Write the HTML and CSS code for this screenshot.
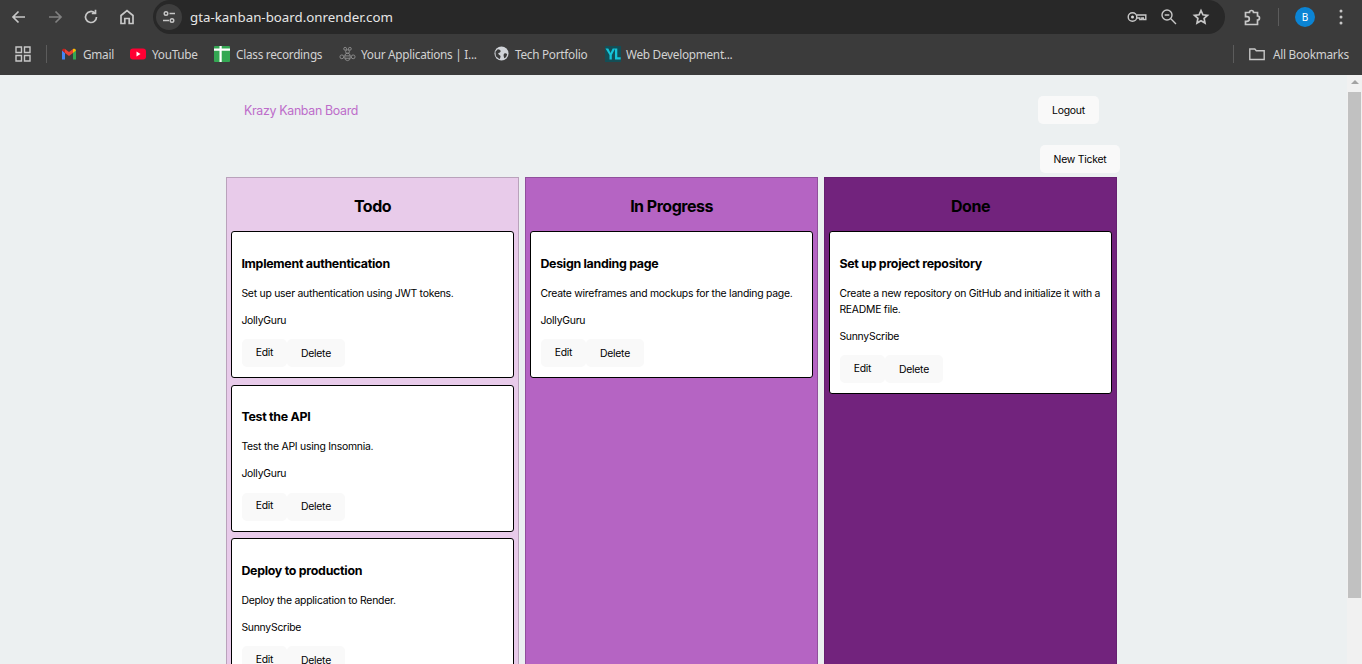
FILE: index.html
```html
<!DOCTYPE html>
<html lang="en">
<head>
<meta charset="utf-8">
<title>Krazy Kanban Board</title>
<link rel="stylesheet" href="styles.css">
</head>
<body>
<div class="browser">
  <header class="toolbar">
    <div class="nav-icons">
      <svg class="tb-icon" viewBox="0 0 20 20"><path d="M16 10H4.500M9.500 4.500 4 10l5.500 5.500" class="ic"/></svg>
      <svg class="tb-icon dim" viewBox="0 0 20 20"><path d="M4 10h11.500M10.500 4.500 16 10l-5.500 5.500" class="ic"/></svg>
      <svg class="tb-icon" viewBox="0 0 20 20"><path d="M15.500 10a5.500 5.500 0 1 1-1.700-4M14.500 2.800V6.500h-3.700" class="ic"/></svg>
      <svg class="tb-icon" viewBox="0 0 20 20"><path d="M4 16.500V8.500L10 3.500l6 5v8h-3.800v-5H7.800v5Z" class="ic"/></svg>
    </div>
    <div class="omnibox">
      <span class="tune"><svg viewBox="0 0 16 16" width="16" height="16"><circle cx="5" cy="4.500" r="1.800" class="ic thin"/><path d="M8.500 4.500H14M2 11.500h6" class="ic thin"/><circle cx="11" cy="11.500" r="1.800" class="ic thin"/></svg></span>
      <span class="url">gta-kanban-board.onrender.com</span>
      <div class="omni-right">
        <svg class="om-icon" viewBox="0 0 20 20"><circle cx="5.500" cy="10" r="4.300" class="ic thin"/><circle cx="5.500" cy="10" r="1.500" fill="#d8d8d8"/><path d="M9.800 8h9v4.500h-2.500v-1.500h-1.500v1.500h-2V11H9.800" class="ic thin"/></svg>
        <svg class="om-icon" viewBox="0 0 20 20"><circle cx="8" cy="8" r="5" class="ic thin"/><path d="M11.800 11.800 17 17M5.700 8h4.600" class="ic thin"/></svg>
        <svg class="om-icon" viewBox="0 0 20 20"><path d="m10 3.500 1.900 4.300 4.600.5-3.400 3.100.9 4.600L10 13.700l-4 2.300.9-4.600-3.400-3.100 4.600-.5Z" class="ic"/></svg>
      </div>
    </div>
    <div class="tb-right">
      <svg class="ext" viewBox="0 0 20 20"><path d="M3.500 5.500h4a2 2 0 0 1 4 0h4V9a2 2 0 0 1 0 4v4.500h-12v-3.200h1.500a2.300 2.300 0 0 0 0-4.600H3.500Z" class="ic"/></svg>
      <span class="vsep"></span>
      <span class="avatar">B</span>
      <svg class="dots" viewBox="0 0 4 16"><circle cx="2" cy="2" r="1.500"/><circle cx="2" cy="8" r="1.500"/><circle cx="2" cy="14" r="1.500"/></svg>
    </div>
  </header>
  <nav class="bookmarks">
    <svg class="apps" viewBox="0 0 16 16"><path class="ic thin" d="M1 1h5.500v5.500H1zM9.500 1H15v5.500H9.500zM1 9.500h5.500V15H1zM9.500 9.500H15V15H9.500z"/></svg>
    <span class="vsep bm-sep"></span>
    <a class="bm bm-gmail"><svg class="fav" viewBox="0 0 16 16"><path d="M1 4v9.500h3V7z" fill="#4285f4"/><path d="M15 4v9.500h-3V7z" fill="#34a853"/><path d="M4 7V3L8 6l4-3v4L8 10z" fill="#ea4335"/><path d="M1 4.500C1 3 3 2.300 4 3v4z" fill="#c5221f"/><path d="M15 4.500c0-1.500-2-2.200-3-1.500v4z" fill="#fbbc04"/></svg>Gmail</a>
    <a class="bm bm-yt"><svg class="fav" viewBox="0 0 16 16"><rect y="2.500" width="16" height="11" rx="3" fill="#ff0033"/><path d="m6.500 5.500 4 2.500-4 2.500z" fill="#fff"/></svg>YouTube</a>
    <a class="bm bm-class"><svg class="fav" viewBox="0 0 16 16"><rect width="16" height="16" rx="1" fill="#34a853"/><path d="M5.500 0h2.200v2.500H16v2.300H7.700V16H5.500V4.800H0V2.500h5.500z" fill="#fff"/></svg>Class recordings</a>
    <a class="bm bm-apps"><svg class="fav bee" viewBox="0 0 18 16"><g fill="none" stroke="#8e8e8e" stroke-width="1"><circle cx="6.500" cy="2.500" r="1.500"/><circle cx="11.500" cy="2.500" r="1.500"/><circle cx="9" cy="5.500" r="2"/><ellipse cx="9" cy="11" rx="3" ry="4"/><circle cx="3" cy="11" r="2"/><circle cx="15" cy="11" r="2"/><path d="M6 10h6M6 12.500h6"/></g></svg>Your Applications | I...</a>
    <a class="bm bm-tech"><svg class="fav globe" viewBox="0 0 16 16"><circle cx="8" cy="8" r="7.500" fill="#d0d3d8"/><path d="M4 3.500c2 .5 3.500 1 3 2.500S4.500 6.500 4.500 8 7 9.500 7 11s-1 3-1 3L2 11 1.500 6zM11 8c1.500-.5 2.500 0 3 1-.5 2-1.500 3.500-3 4-.5-1.500-1.500-4 0-5z" fill="#3b3b3b"/></svg>Tech Portfolio</a>
    <a class="bm bm-web"><svg class="fav" viewBox="0 0 16 16"><rect width="16" height="16" fill="#134e56"/><path d="M.5 2.500h2.800L5.500 7l2.200-4.500h2.500L6.800 9v4.500H4.500V9zM10 2.500h2.300v8.700h3.400v2.300H10z" fill="#15c4d8"/></svg>Web Development...</a>
    <span class="vsep bm-sep2"></span>
    <a class="bm bm-all"><svg class="fav" viewBox="0 0 16 16"><path class="ic thin" d="M.8 3h5l1.500 1.700h7.900v8.800H.8Z"/></svg>All Bookmarks</a>
  </nav>
  <div class="viewport">
    <main class="page">
      <div class="app">
        <div class="topnav">
          <a class="brand">Krazy Kanban Board</a>
          <button class="btn">Logout</button>
        </div>
        <div class="actions"><button class="btn">New Ticket</button></div>
        <section class="board">
          <div class="col col-todo">
            <h2>Todo</h2>
            <article class="card">
              <h3>Implement authentication</h3>
              <p>Set up user authentication using JWT tokens.</p>
              <p class="who">JollyGuru</p>
              <div class="card-btns"><button class="btn edit">Edit</button><button class="btn del">Delete</button></div>
            </article>
            <article class="card">
              <h3>Test the API</h3>
              <p>Test the API using Insomnia.</p>
              <p class="who">JollyGuru</p>
              <div class="card-btns"><button class="btn edit">Edit</button><button class="btn del">Delete</button></div>
            </article>
            <article class="card">
              <h3>Deploy to production</h3>
              <p>Deploy the application to Render.</p>
              <p class="who">SunnyScribe</p>
              <div class="card-btns"><button class="btn edit">Edit</button><button class="btn del">Delete</button></div>
            </article>
          </div>
          <div class="col col-prog">
            <h2>In Progress</h2>
            <article class="card">
              <h3>Design landing page</h3>
              <p>Create wireframes and mockups for the landing page.</p>
              <p class="who">JollyGuru</p>
              <div class="card-btns"><button class="btn edit">Edit</button><button class="btn del">Delete</button></div>
            </article>
          </div>
          <div class="col col-done">
            <h2>Done</h2>
            <article class="card">
              <h3>Set up project repository</h3>
              <p>Create a new repository on GitHub and initialize it with a README file.</p>
              <p class="who">SunnyScribe</p>
              <div class="card-btns"><button class="btn edit">Edit</button><button class="btn del">Delete</button></div>
            </article>
          </div>
        </section>
      </div>
    </main>
    <aside class="scrollbar"><span class="sb-arrow"></span><span class="sb-thumb"></span></aside>
  </div>
</div>
</body>
</html>
```
FILE: styles.css
```css
* { box-sizing: border-box; }
html, body { margin: 0; height: 100%; overflow: hidden; }
body { font-family: Inter, "Liberation Sans", sans-serif; }
.browser { display: flex; flex-direction: column; height: 664px; }

.toolbar { display: flex; height: 36px; background: #3b3b3b; flex: none; }
.ic { fill: none; stroke: #c7c7c7; stroke-width: 1.700; }
.ic.thin { stroke-width: 1.400; }
.nav-icons { display: flex; gap: 16px; padding: 7px 0 0 9px; width: 153px; }
.tb-icon { width: 20px; height: 20px; }
.tb-icon.dim { opacity: .5; }
.omnibox { display: flex; align-items: center; width: 1072px; height: 34px; background: #282828; border-radius: 17px; padding: 0 14px 0 3px; }
.tune { display: flex; align-items: center; justify-content: center; width: 26px; height: 26px; border-radius: 50%; background: #3e3e3e; }
.url { font: 13.300px "Noto Sans", sans-serif; color: #e6e6e6; margin-left: 8px; }
.omni-right { display: flex; gap: 12px; margin-left: auto; }
.om-icon { width: 20px; height: 20px; }
.tb-right { display: flex; align-items: center; height: 34px; padding-left: 17px; }
.ext { width: 20px; height: 20px; }
.vsep { display: block; width: 1px; height: 18px; background: #5c5c5c; }
.tb-right .vsep { margin-left: 16px; }
.avatar { display: flex; align-items: center; justify-content: center; width: 20px; height: 20px; border-radius: 50%; background: #0b84d4; color: #fff; font: 10px "Noto Sans", sans-serif; margin-left: 16px; }
.dots { width: 4px; height: 16px; fill: #c7c7c7; margin-left: 24px; }

.bookmarks { display: flex; align-items: center; height: 39px; background: #3b3b3b; flex: none; padding: 0 0 4px 15px; }
.apps { width: 16px; height: 16px; }
.bm-sep { margin-left: 15px; }
.bm { display: flex; align-items: center; gap: 7px; font: 11.800px "Noto Sans", sans-serif; letter-spacing: -.28px; color: #d2d2d2; white-space: nowrap; }
.fav { width: 16px; height: 16px; flex: none; }
.bee { width: 17px; }
.globe { width: 15px; height: 15px; }
.bm-gmail { margin-left: 14px; width: 69px; gap: 6px; }
.bm-yt { width: 84px; gap: 6px; }
.bm-class { width: 125px; gap: 6px; }
.bm-apps { width: 155px; gap: 5px; }
.bm-tech { width: 111px; gap: 6px; }
.bm-web { gap: 5px; width: 628px; }
.bm-sep2 { flex: none; }
.bm-all { margin-left: 15px; gap: 8px; }

.viewport { display: flex; flex: 1; min-height: 0; }
.page { flex: 1; background: #ecf0f1; overflow: hidden; padding-left: 226px; }
.app { width: 891px; }
.topnav { display: flex; align-items: center; justify-content: space-between; padding: 21px 18px 0; height: 49px; }
.brand { color: #bd6dca; font-size: 12.400px; letter-spacing: -.33px; }
.btn { font-family: inherit; font-size: 10.400px; letter-spacing: -.24px; color: #000; background: #f9f9f9; border: 0; border-radius: 5px; height: 28px; padding: 0; }
.topnav .btn { width: 61px; }
.actions { display: flex; justify-content: flex-end; margin: 21px -3px 0 0; height: 32px; }
.actions .btn { width: 80px; }
.board { display: flex; gap: 6px; }
.col { flex: 0 0 293px; height: 600px; border: 1px solid rgba(0,0,0,.2); padding: 0 4px; }
.col-todo { background: #e8cbea; }
.col-prog { background: #b564c3; }
.col-done { background: #72237d; border-color: rgba(0,0,0,.1); }
.col h2 { margin: 0; font-size: 16px; letter-spacing: -.5px; font-weight: 700; line-height: 20px; padding: 18px 0 15px; text-align: center; color: #000; }
.card { background: #fff; border: 1px solid #000; border-radius: 3px; margin-bottom: 6.500px; padding: 0 9.400px 10px; }
.card h3 { margin: 0; padding: 23.875px 0 14px; font-size: 12.400px; letter-spacing: -.28px; line-height: 16px; font-weight: 700; color: #000; }
.card p { margin: 0; font-size: 10.400px; letter-spacing: -.24px; line-height: 16px; color: #000; padding-bottom: 11px; }
.card p.who { padding-bottom: 10.125px; }
.card-btns { display: flex; padding-left: .600px; }
.edit { width: 45px; padding-bottom: 2px; }
.del { width: 58px; }

.scrollbar { flex: 0 0 15px; background: #f1f1f1; display: flex; flex-direction: column; align-items: center; }
.sb-arrow { width: 0; height: 0; margin-top: 5px; border: 4px solid transparent; border-top: 0; border-bottom: 4px solid #a3a3a3; }
.sb-thumb { width: 13px; height: 506px; background: #c1c1c1; margin-top: 8px; }
```
